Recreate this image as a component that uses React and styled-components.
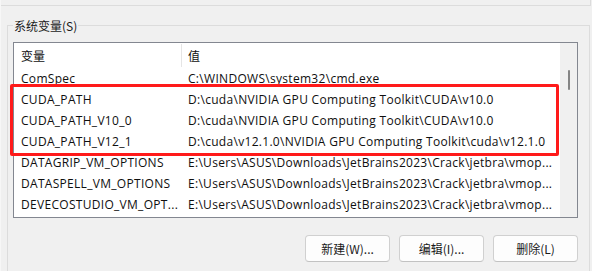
import React from 'react'
import styled, { createGlobalStyle } from 'styled-components'

const GlobalStyle = createGlobalStyle`
  html, body {
    margin: 0;
    padding: 0;
    background: #f0f0f0;
  }
  body {
    width: 592px;
    height: 271px;
    overflow: hidden;
    font-family: "Open Sans", "Noto Sans CJK SC", sans-serif;
    font-size: 12px;
    color: #000;
  }
`

const rows = [
  ['ComSpec', 'C:\\WINDOWS\\system32\\cmd.exe'],
  ['CUDA_PATH', 'D:\\cuda\\NVIDIA GPU Computing Toolkit\\CUDA\\v10.0'],
  ['CUDA_PATH_V10_0', 'D:\\cuda\\NVIDIA GPU Computing Toolkit\\CUDA\\v10.0'],
  ['CUDA_PATH_V12_1', 'D:\\cuda\\v12.1.0\\NVIDIA GPU Computing Toolkit\\cuda\\v12.1.0'],
  ['DATAGRIP_VM_OPTIONS', 'E:\\Users\\ASUS\\Downloads\\JetBrains2023\\Crack\\jetbra\\vmop...'],
  ['DATASPELL_VM_OPTIONS', 'E:\\Users\\ASUS\\Downloads\\JetBrains2023\\Crack\\jetbra\\vmop...'],
  ['DEVECOSTUDIO_VM_OPT...', 'E:\\Users\\ASUS\\Downloads\\JetBrains2023\\Crack\\jetbra\\vmop...'],
]

function App() {
  return (
    <>
      <GlobalStyle />
      <Window>
        <PrevGroup />
        <Group>
          <Legend>系统变量(S)</Legend>
          <ListBox>
            <ListArea>
              <Header>
                <NameCell>变量</NameCell>
                <ValueCell>值</ValueCell>
              </Header>
              {rows.map(([name, value]) => (
                <Row key={name}>
                  <NameCell>{name}</NameCell>
                  <ValueCell>{value}</ValueCell>
                </Row>
              ))}
            </ListArea>
            <ScrollBar>
              <Thumb />
            </ScrollBar>
            <Highlight />
          </ListBox>
          <Buttons>
            <Button>新建(W)...</Button>
            <Button>编辑(I)...</Button>
            <Button>删除(L)</Button>
          </Buttons>
        </Group>
      </Window>
    </>
  )
}

export default App

const Window = styled.div`
  width: 592px;
  height: 271px;
  overflow: hidden;
  border-left: 1px solid #f7f7f7;
  box-sizing: border-box;
`

const PrevGroup = styled.div`
  width: 590px;
  height: 5px;
  border-bottom: 1px solid #dcdcdc;
  border-right: 1px solid #dcdcdc;
  box-sizing: content-box;
  margin-left: -1px;
`

const Group = styled.fieldset`
  margin: 11px 0 0 6px;
  padding: 0 11px 0 5px;
  width: 583px;
  box-sizing: border-box;
  height: 260px;
  border: 1px solid #dcdcdc;
  border-bottom: none;
`

const Legend = styled.legend`
  padding: 0 1px;
  margin-left: 0;
  font-family: "Noto Sans CJK SC", sans-serif;
  font-size: 12px;
  color: #1a1a1a;
  line-height: 17px;
`

const ListBox = styled.div`
  position: relative;
  margin-top: 8px;
  height: 176px;
  border: 1px solid #838790;
  box-sizing: border-box;
  background: #fff;
  display: flex;
`

const ListArea = styled.div`
  flex: 1;
  overflow: hidden;
  border-right: 1px solid #fff;
  letter-spacing: 0.3px;
`

const Header = styled.div`
  display: flex;
  height: 25px;
  align-items: center;
  font-family: "Noto Sans CJK SC", sans-serif;
  letter-spacing: 0;

  & > div:first-child {
    border-right: 1px solid #e5e5e5;
    height: 23px;
    line-height: 23px;
  }
`

const Row = styled.div`
  display: flex;
  height: 21px;
  align-items: center;
`

const NameCell = styled.div`
  width: 168px;
  box-sizing: border-box;
  padding-left: 7px;
  white-space: nowrap;
  overflow: hidden;
  color: #0f0f0f;
`

const ValueCell = styled.div`
  flex: 1;
  padding-left: 6px;
  white-space: nowrap;
  overflow: hidden;
  color: #0f0f0f;
`

const ScrollBar = styled.div`
  width: 17px;
  background: #f0f0f0;
  position: relative;
`

const Thumb = styled.div`
  position: absolute;
  left: 8px;
  top: 27px;
  width: 2px;
  height: 20px;
  background: #858585;
  border-radius: 1px;
`

const Highlight = styled.div`
  position: absolute;
  left: -4px;
  top: 41px;
  width: 549px;
  height: 72px;
  border: 3px solid #ff1a1a;
  border-radius: 2px;
  box-sizing: border-box;
  pointer-events: none;
`

const Buttons = styled.div`
  display: flex;
  justify-content: flex-end;
  gap: 9px;
  margin-top: 17px;
`

const Button = styled.button`
  width: 85px;
  height: 27px;
  background: #fdfdfd;
  border: 1px solid #d0d0d0;
  border-bottom-color: #c2c2c2;
  border-radius: 4px;
  font-family: "Noto Sans CJK SC", sans-serif;
  font-size: 12px;
  color: #1a1a1a;
  padding: 0;
`
